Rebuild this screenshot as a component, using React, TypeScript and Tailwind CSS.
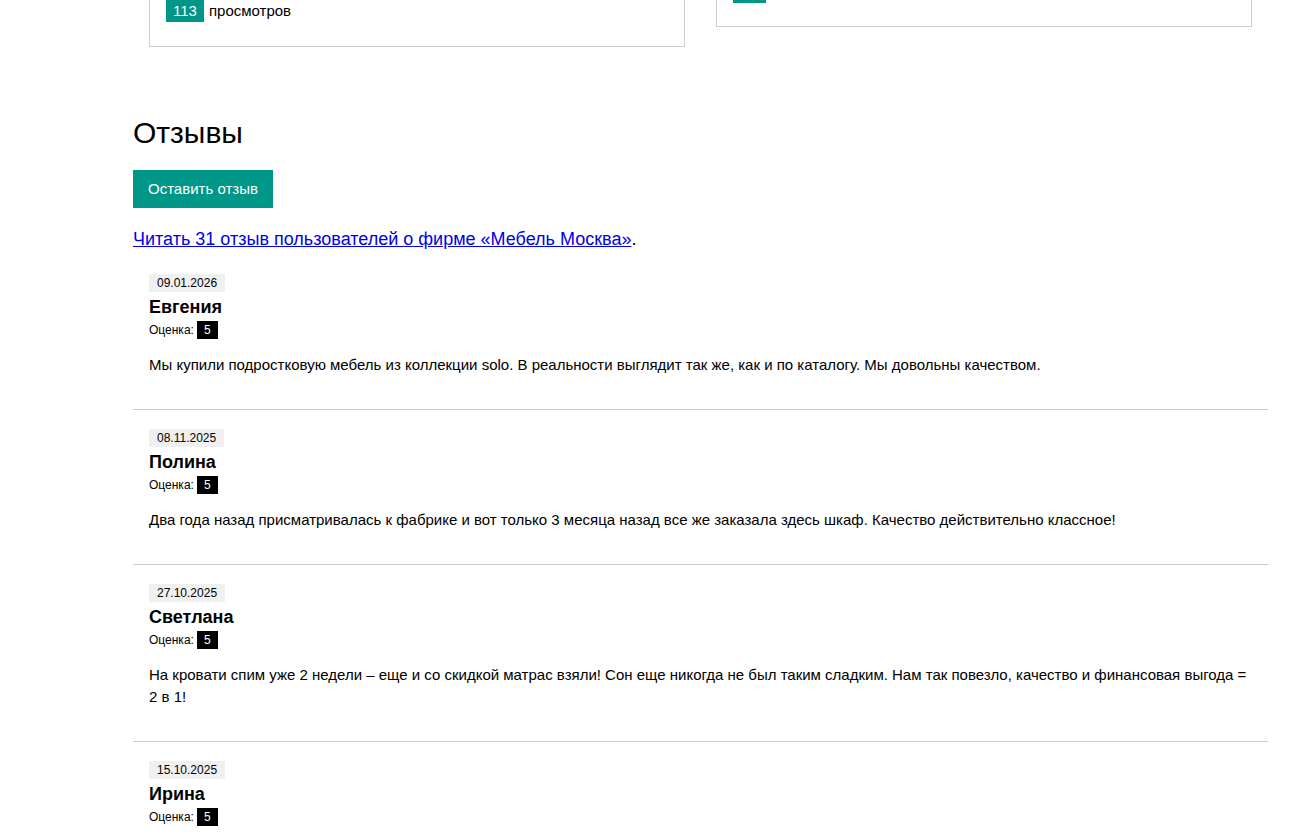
import React from "react";

const reviews = [
  {
    date: "09.01.2026",
    name: "Евгения",
    text: "Мы купили подростковую мебель из коллекции solo. В реальности выглядит так же, как и по каталогу. Мы довольны качеством.",
  },
  {
    date: "08.11.2025",
    name: "Полина",
    text: "Два года назад присматривалась к фабрике и вот только 3 месяца назад все же заказала здесь шкаф. Качество действительно классное!",
  },
  {
    date: "27.10.2025",
    name: "Светлана",
    text: "На кровати спим уже 2 недели – еще и со скидкой матрас взяли! Сон еще никогда не был таким сладким. Нам так повезло, качество и финансовая выгода = 2 в 1!",
  },
  {
    date: "15.10.2025",
    name: "Ирина",
    text: "",
  },
];

export default function App() {
  return (
    <div
      className="w-[1300px] h-[835px] overflow-hidden bg-white text-black"
      style={{ fontFamily: '"Liberation Sans", Arial, sans-serif' }}
    >
      <div className="ml-[133px] w-[1135px]">
        <div className="grid grid-cols-2 gap-[31px] px-4 items-start">
          <div className="border-x border-b border-[#cccccc] px-4 pb-6">
            <div className="flex items-center h-[22px]">
              <span className="bg-[#009688] text-white text-[15px] leading-[22px] px-[7px]">113</span>
              <span className="text-[15px] leading-[22px] ml-[5px]">просмотров</span>
            </div>
          </div>
          <div className="border-x border-b border-[#cccccc] px-4 pb-[23px]">
            <div className="w-[33px] h-[3px] bg-[#009688]"></div>
          </div>
        </div>

        <h2 className="text-[30px] leading-[36px] font-normal mt-[68px]">Отзывы</h2>
        <button className="mt-[19px] bg-[#009688] text-white text-[15px] leading-[18px] h-[38px] px-[15px] block">
          Оставить отзыв
        </button>
        <p className="mt-[20px] text-[18px] leading-[22px]">
          <a href="#" className="text-[#0000ee] underline">
            Читать 31 отзыв пользователей о фирме «Мебель Москва»
          </a>
          .
        </p>

        <div className="mt-[4px]">
          {reviews.map((r, i) => (
            <div
              key={i}
              className={`px-4 ${i === 0 ? "pt-5" : "pt-[19px]"} pb-[33px] ${i < reviews.length - 1 ? "border-b border-[#cccccc]" : ""}`}
            >
              <div className="w-fit bg-[#f0f0f0] text-[12px] leading-[18px] px-2">{r.date}</div>
              <div className="text-[18px] leading-[22px] font-bold mt-[4px]">{r.name}</div>
              <div className="flex items-center mt-[3px] h-[18px]">
                <span className="text-[12px] leading-[18px]">Оценка:</span>
                <span className="ml-[3px] bg-black text-white text-[12px] leading-[18px] px-[7px]">5</span>
              </div>
              {r.text && <p className="mt-[15px] text-[15px] leading-[22px]">{r.text}</p>}
            </div>
          ))}
        </div>
      </div>
    </div>
  );
}
